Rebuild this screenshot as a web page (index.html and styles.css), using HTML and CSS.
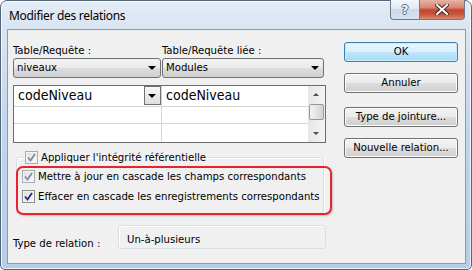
FILE: index.html
```html
<html>
  <head>
    <title>Modifier des relations</title>
    <meta name="viewport" content="width=device-width, initial-scale=1.0">
    <link rel="stylesheet" href="styles.css">
  </head>
  <body>
    <div class="window">
      <div class="titlebar">
        <span class="title">Modifier des relations</span>
        <div class="caption-buttons">
          <div class="cap help">?</div>
          <div class="cap close">
            <svg width="14" height="11" viewBox="0 0 14 11">
              <path d="M2 1 L12 10 M12 1 L2 10" stroke="#4a2a25" stroke-width="4" stroke-linecap="square"/>
              <path d="M2 1 L12 10 M12 1 L2 10" stroke="#fff" stroke-width="2" stroke-linecap="square"/>
            </svg>
          </div>
        </div>
      </div>

      <div class="client">
        <div class="left">
          <div class="tables">
            <div class="col col-a">
              <label>Table/Requête :</label>
              <div class="combo">niveaux<span class="arrow"></span></div>
            </div>
            <div class="col col-b">
              <label>Table/Requête liée :</label>
              <div class="combo">Modules<span class="arrow"></span></div>
            </div>
          </div>

          <div class="grid">
            <div class="cells">
              <div class="row row1">
                <div class="cell c1">codeNiveau<span class="cell-drop"><span class="arrow"></span></span></div>
                <div class="cell c2">codeNiveau</div>
              </div>
              <div class="row row2">
                <div class="cell c1"></div>
                <div class="cell c2"></div>
              </div>
              <div class="row row3">
                <div class="cell c1"></div>
                <div class="cell c2"></div>
              </div>
            </div>
            <div class="scrollbar">
              <div class="sb-btn"><span class="up"></span></div>
              <div class="sb-track"><div class="sb-thumb"></div></div>
              <div class="sb-btn"><span class="down"></span></div>
            </div>
          </div>

          <fieldset class="group">
            <legend>
              <span class="check light">
                <svg width="9" height="9" viewBox="0 0 9 9"><path d="M1 4.5 L3.5 7.5 L8 1" fill="none" stroke="#7d8cab" stroke-width="1.8"/></svg>
              </span>Appliquer l'intégrité référentielle
            </legend>
            <div class="opt">
              <span class="check light">
                <svg width="9" height="9" viewBox="0 0 9 9"><path d="M1 4.5 L3.5 7.5 L8 1" fill="none" stroke="#7d8cab" stroke-width="1.8"/></svg>
              </span>Mettre à jour en cascade les champs correspondants
            </div>
            <div class="opt">
              <span class="check">
                <svg width="9" height="9" viewBox="0 0 9 9"><path d="M1 4.5 L3.5 7.5 L8 1" fill="none" stroke="#1c2f8a" stroke-width="1.8"/></svg>
              </span>Effacer en cascade les enregistrements correspondants
            </div>
          </fieldset>

          <div class="reltype">
            <span class="reltype-label">Type de relation :</span>
            <div class="reltype-box">Un-à-plusieurs</div>
          </div>
        </div>

        <div class="buttons">
          <div class="btn default btn-ok">OK</div>
          <div class="btn btn-cancel">Annuler</div>
          <div class="btn btn-join">Type de jointure...</div>
          <div class="btn btn-new">Nouvelle relation...</div>
        </div>
      </div>

      <div class="highlight"></div>
    </div>
  </body>
</html>
```

FILE: styles.css
```css
body {
  margin: 0;
  padding: 0;
  background: #fff;
  font-family: "DejaVu Sans Condensed", "DejaVu Sans", sans-serif;
  font-size: 11.25px;
  color: #000;
}

.window {
  position: relative;
  box-sizing: border-box;
  width: 472px;
  height: 270px;
  border: 1px solid #56667a;
  border-radius: 7px 7px 5px 5px;
  background: linear-gradient(to bottom, #e4ecf6 0px, #d9e5f2 28px, #c2d6ed 120px, #b6cde8 270px);
  box-shadow: inset 0 0 0 1px rgba(255, 255, 255, 0.7);
  display: flex;
  flex-direction: column;
}

.titlebar {
  height: 28px;
  display: flex;
  align-items: flex-start;
  justify-content: space-between;
}

.title {
  font-family: "Noto Sans", sans-serif;
  font-size: 12px;
  color: #000;
  margin: 6px 0 0 8px;
  letter-spacing: -0.3px;
}

.caption-buttons {
  display: flex;
  margin-right: 6px;
  margin-top: -1px;
}

.cap {
  box-sizing: border-box;
  height: 20px;
  display: flex;
  align-items: center;
  justify-content: center;
  border: 1px solid #6c7a8c;
  border-top: none;
}

.help {
  width: 29px;
  border-right: none;
  border-radius: 0 0 0 4px;
  background: linear-gradient(to bottom, #f4f7fb 0%, #e1e9f3 45%, #ccd9e8 50%, #d7e2ef 100%);
  font-family: "DejaVu Sans", sans-serif;
  font-weight: bold;
  font-size: 12px;
  color: #f4f6f9;
  text-shadow: -1px 0 #5f6c7c, 1px 0 #5f6c7c, 0 -1px #5f6c7c, 0 1px #5f6c7c;
}

.close {
  width: 46px;
  border-radius: 0 0 4px 0;
  background: linear-gradient(to bottom, #e8b2a8 0%, #d88775 40%, #c4452f 52%, #c8543d 75%, #d98a72 100%);
}

.client {
  box-sizing: border-box;
  margin: 0 5px 5px 6px;
  height: 235px;
  border: 1px solid #8a9cb2;
  background: #f0f0f0;
  display: flex;
}

.left {
  width: 313px;
  margin-left: 5px;
  padding-top: 14px;
}

.tables {
  display: flex;
  gap: 1px;
}

.col label {
  display: block;
  height: 13px;
  line-height: 13px;
  margin-bottom: 1px;
}

.col-a {
  width: 148px;
}

.col-b {
  width: 163px;
}

.combo {
  position: relative;
  box-sizing: border-box;
  height: 20px;
  line-height: 18px;
  padding-left: 3px;
  border: 1px solid #707070;
  border-radius: 3px;
  background: linear-gradient(to bottom, #f2f2f2 0%, #ebebeb 50%, #dddddd 51%, #cfcfcf 100%);
}

.col-b .combo {
  width: 162px;
}

.arrow {
  position: absolute;
  right: 4px;
  top: 7px;
  width: 0;
  height: 0;
  border-left: 4px solid transparent;
  border-right: 4px solid transparent;
  border-top: 4px solid #000;
}

.grid {
  margin-top: 7px;
  box-sizing: border-box;
  height: 58px;
  border: 1px solid #6b6b6b;
  background: #fff;
  display: flex;
}

.cells {
  width: 294px;
}

.row {
  display: flex;
  border-bottom: 1px solid #d4d4d4;
}

.row1 {
  height: 20px;
}

.row2 {
  height: 16px;
}

.row3 {
  height: 18px;
  border-bottom: none;
}

.cell {
  position: relative;
  font-size: 14px;
  line-height: 19px;
  padding-left: 4px;
  color: #000;
}

.c1 {
  width: 143px;
  border-right: 1px solid #d4d4d4;
}

.c2 {
  width: 142px;
}

.cell-drop {
  position: absolute;
  right: 0;
  top: 0;
  box-sizing: border-box;
  width: 17px;
  height: 19px;
  border: 1px solid #707070;
  background: linear-gradient(to bottom, #f6f6f6, #dedede);
}

.cell-drop .arrow {
  right: 4px;
  top: 7px;
}

.scrollbar {
  width: 17px;
  display: flex;
  flex-direction: column;
  background: linear-gradient(to right, #e6e6e6, #f4f4f4);
}

.sb-btn {
  height: 17px;
  position: relative;
}

.sb-track {
  flex: 1;
  padding: 1px 0 0 1px;
}

.sb-thumb {
  box-sizing: border-box;
  width: 15px;
  height: 16px;
  border: 1px solid #979797;
  border-radius: 2px;
  background: linear-gradient(to right, #f3f3f3, #e2e2e2 50%, #d5d5d5);
}

.up, .down {
  position: absolute;
  left: 5px;
  width: 0;
  height: 0;
  border-left: 3.5px solid transparent;
  border-right: 3.5px solid transparent;
}

.up {
  top: 7px;
  border-bottom: 3px solid #4d4d4d;
}

.down {
  top: 7px;
  border-top: 3px solid #4d4d4d;
}

.group {
  margin: 8px 2px 0 3px;
  padding: 2px 0 7px 5px;
  border: 1px solid #d5dfe5;
  border-radius: 3px;
  box-shadow: inset 1px 1px 0 #fff, 1px 1px 0 #fff;
  min-width: 0;
}

.group legend {
  padding: 0 2px 0 1px;
  margin-left: 2px;
  height: 13px;
  line-height: 13px;
  display: flex;
  align-items: center;
}

.opt {
  height: 20px;
  display: flex;
  align-items: center;
}

.check {
  box-sizing: border-box;
  width: 13px;
  height: 13px;
  margin-right: 3px;
  border: 1px solid #8e8f8f;
  background: linear-gradient(135deg, #dcdcdc, #fbfbfb);
  box-shadow: inset 0 0 0 1px #f4f4f4;
  display: inline-flex;
  align-items: center;
  justify-content: center;
  flex-shrink: 0;
}

.check.light {
  border-color: #a9acaf;
}

.reltype {
  margin-top: 11px;
  display: flex;
}

.reltype-label {
  width: 105px;
  margin-top: 12px;
  line-height: 13px;
}

.reltype-box {
  box-sizing: border-box;
  width: 208px;
  height: 24px;
  padding: 7px 0 0 8px;
  line-height: 13px;
  border: 1px solid #d5dfe5;
  border-radius: 3px;
  box-shadow: inset 1px 1px 0 #fff;
}

.buttons {
  margin-left: 18px;
  padding-top: 12px;
  width: 114px;
}

.btn {
  box-sizing: border-box;
  height: 20px;
  line-height: 18px;
  text-align: center;
  border: 1px solid #707070;
  border-radius: 3px;
  background: linear-gradient(to bottom, #f2f2f2 0%, #ebebeb 50%, #dddddd 51%, #cfcfcf 100%);
  box-shadow: inset 0 0 0 1px #fcfcfc;
}

.btn.default {
  border-color: #3c7fb1;
  background: linear-gradient(to bottom, #eaf6fd 0%, #d9f0fc 50%, #bee6fd 51%, #a7d9f5 100%);
  box-shadow: inset 0 0 0 1px #c5ecfc;
}

.btn-cancel {
  margin-top: 11px;
}

.btn-join {
  margin-top: 14px;
}

.btn-new {
  margin-top: 11px;
}

.highlight {
  position: absolute;
  left: 15px;
  top: 165px;
  width: 316px;
  height: 49px;
  box-sizing: border-box;
  border: 2px solid #e5242c;
  border-radius: 7px;
  box-shadow: 1px 1px 2px rgba(0, 0, 0, 0.2);
}
```
